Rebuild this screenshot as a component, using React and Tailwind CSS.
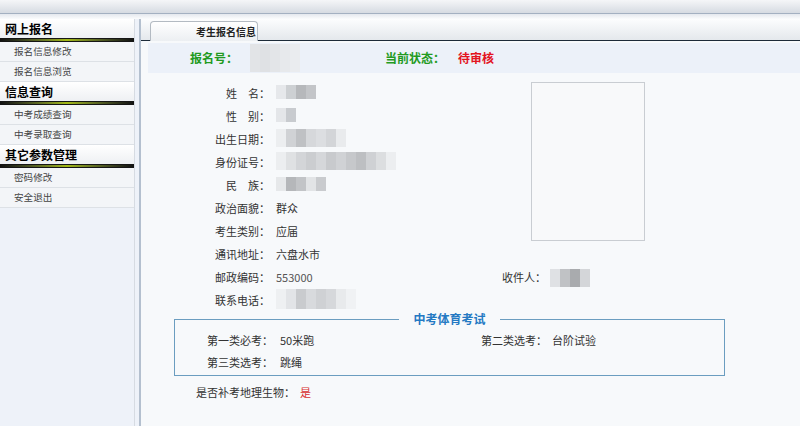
const menus = [
  { title: "网上报名", items: ["报名信息修改", "报名信息浏览"] },
  { title: "信息查询", items: ["中考成绩查询", "中考录取查询"] },
  { title: "其它参数管理", items: ["密码修改", "安全退出"] },
];

const rows = [
  { label: "姓　名：", blur: { cells: ["#e6e8eb", "#cdd0d3", "#b6b8bb", "#c3c5c8"], h: 14 } },
  { label: "性　别：", blur: { cells: ["#e4e6e9", "#c8cbcf"], h: 14 } },
  { label: "出生日期：", blur: { cells: ["#eceef0", "#d0d2d5", "#bfc1c4", "#d6d8db", "#dcdee1", "#d3d5d8", "#e9ebed"], h: 18 } },
  { label: "身份证号：", blur: { cells: ["#eceef0", "#dfe1e3", "#d3d5d8", "#cbcdd0", "#d5d7da", "#c8cacd", "#d0d2d5", "#c6c8cb", "#bdbfc2", "#cfd1d4", "#dcdee0", "#eceef0"], h: 18 } },
  { label: "民　族：", blur: { cells: ["#e6e8ea", "#b5b7ba", "#c2c4c7", "#e2e4e6", "#c9cbce"], h: 14 } },
  { label: "政治面貌：", value: "群众" },
  { label: "考生类别：", value: "应届" },
  { label: "通讯地址：", value: "六盘水市" },
  { label: "邮政编码：", value: "553000", muted: true },
  { label: "联系电话：", blur: { cells: ["#eef0f2", "#e2e4e7", "#c9cbce", "#d8dadd", "#cfd1d4", "#d6d8db", "#e8eaec", "#f0f2f4"], h: 20 } },
];

function Mosaic({ cells, h = 14, w = 10 }) {
  return (
    <span className="inline-flex blur-[0.6px]">
      {cells.map((c, i) => (
        <span key={i} style={{ background: c, width: w, height: h }} />
      ))}
    </span>
  );
}

function MenuGroup({ title, items }) {
  return (
    <div>
      <div className="h-[19px] flex items-center pl-[5px] text-[12px] font-bold text-black bg-gradient-to-b from-white to-[#eef0f3]">
        {title}
      </div>
      <div className="h-[4px] border-y border-[#161616] bg-gradient-to-r from-[#111] via-[#a3ba14] to-[#111]" />
      {items.map((item) => (
        <div
          key={item}
          className="h-[20px] flex items-center pl-[14px] text-[9.6px] text-[#444] bg-[#f3f5f8] border-b border-[#dde1e6]"
        >
          {item}
        </div>
      ))}
    </div>
  );
}

export default function App() {
  return (
    <div className="w-[800px] h-[426px] overflow-hidden bg-[#eef2f9] font-['Noto_Sans_CJK_SC','Noto_Sans',sans-serif] text-[#333]">
      <div className="h-[14px] bg-gradient-to-b from-[#f5f6f8] to-[#d6dbe2] border-b border-[#a3b0c1]" />
      <div className="h-[5px] bg-gradient-to-b from-[#e4e8ee] to-[#fbfcfd]" />
      <div className="flex">
        <aside className="w-[135px] border-r border-[#d6dbe2]">
          {menus.map((m) => (
            <MenuGroup key={m.title} title={m.title} items={m.items} />
          ))}
        </aside>
        <div className="w-[4px]" />
        <main className="flex-1 h-[407px] border-l-2 border-[#b4c0cf] bg-[#f7f9fb]">
          <div className="h-[22px] flex items-end pl-[9px] bg-gradient-to-b from-[#fcfdfe] to-[#e4e8ec] border-b border-[#1d2b39]">
            <div className="h-[20px] w-[108px] -mb-px bg-gradient-to-b from-white to-[#eceff2] border border-b-0 border-[#b3bac2] rounded-t-[4px] text-[10px] font-bold text-[#222] text-right pr-[1px] leading-[19px]">
              考生报名信息
            </div>
          </div>

          <div className="mt-[2px] ml-[7px] h-[30px] bg-[#ecf1f9] flex items-center text-[12px] font-bold">
            <span className="ml-[42px] w-[60px] text-[#229a22]">报名号：</span>
            <Mosaic cells={["#e2e4e7", "#dfe1e4", "#e3e5e8", "#e7e9ec", "#eaecef"]} h={28} />
            <span className="ml-[85px] w-[73px] text-[#229a22]">当前状态：</span>
            <span className="text-[#e3141f]">待审核</span>
          </div>

          <div className="pt-[9px] flex text-[11px]">
            <div className="w-[349px]">
              {rows.map((r) => (
                <div key={r.label} className="h-[23px] flex items-center">
                  <span className="w-[129px] text-right">{r.label}</span>
                  <span className={`pl-[6px] ${r.muted ? "text-[#555]" : ""}`}>
                    {r.blur ? <Mosaic cells={r.blur.cells} h={r.blur.h} /> : r.value}
                  </span>
                </div>
              ))}
            </div>
            <div>
              <div className="ml-[41px] w-[114px] h-[159px] border border-[#c9cdd2] bg-[#f8f9fa]" />
              <div className="mt-[25px] h-[23px] flex items-center ml-[12px]">
                <span className="w-[48px]">收件人：</span>
                <Mosaic cells={["#dfe1e4", "#c0c2c5", "#a9abae", "#d4d6d9"]} h={18} />
              </div>
            </div>
          </div>

          <fieldset className="ml-[33px] w-[551px] -mt-px border border-[#6b9dc0] pb-[2px]">
            <legend align="center" className="mx-auto px-[14px] text-[12px] font-bold text-[#2479c3] leading-[16px]">
              中考体育考试
            </legend>
            <div className="grid grid-cols-[274px_1fr] pl-[32px] text-[11px] pt-[2px]">
              <div className="h-[22px] flex items-center">
                <span className="w-[73px]">第一类必考：</span>
                <span>50米跑</span>
              </div>
              <div className="h-[22px] flex items-center">
                <span className="w-[71px]">第二类选考：</span>
                <span>台阶试验</span>
              </div>
              <div className="h-[22px] flex items-center">
                <span className="w-[73px]">第三类选考：</span>
                <span>跳绳</span>
              </div>
            </div>
          </fieldset>

          <div className="mt-[5px] ml-[55px] h-[22px] flex items-center text-[11px]">
            <span className="w-[104px]">是否补考地理生物：</span>
            <span className="text-[#d83030]">是</span>
          </div>
        </main>
      </div>
    </div>
  );
}
